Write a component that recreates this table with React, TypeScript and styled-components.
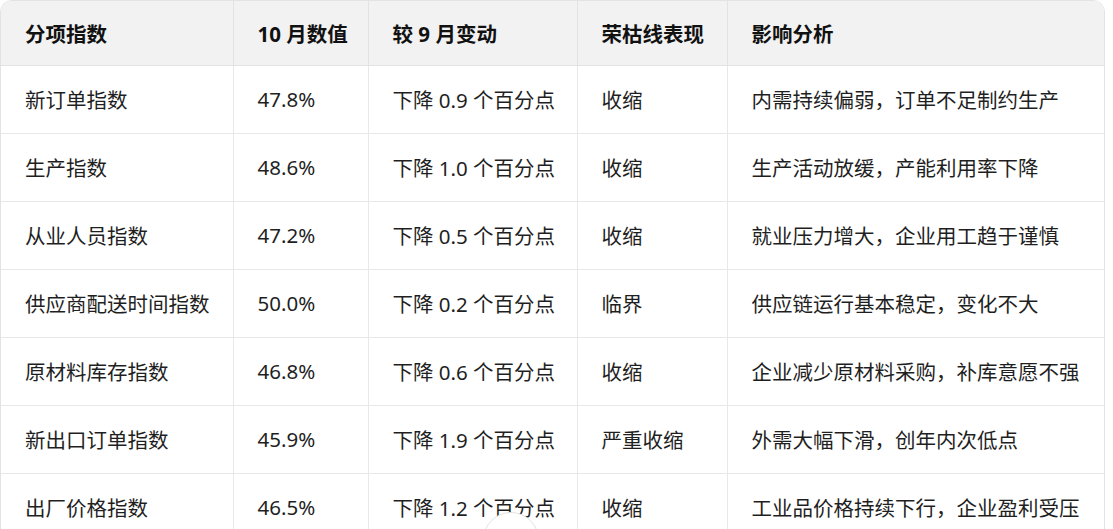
import styled, { createGlobalStyle } from "styled-components";

const GlobalStyle = createGlobalStyle`
  html, body {
    margin: 0;
    padding: 0;
    background: #fff;
    overflow: hidden;
  }
  body {
    font-family: "Noto Sans", "Noto Sans CJK SC", sans-serif;
    color: #1f1f1f;
  }
`;

const Page = styled.div`
  position: relative;
  width: 1113px;
  height: 529px;
  overflow: hidden;
`;

const TableWrap = styled.div`
  width: 1105px;
  border: 1px solid #e3e3e3;
  border-radius: 12px;
  overflow: hidden;
  box-sizing: border-box;
`;

const Table = styled.table`
  width: 100%;
  border-collapse: collapse;
  table-layout: fixed;
  font-size: 20.5px;
`;

const HeadCell = styled.th<{ $w: number }>`
  width: ${(p) => p.$w}px;
  height: 64px;
  padding: 0 0 0 24px;
  background: #f2f2f2;
  text-align: left;
  font-weight: 700;
  color: #111;
  border-bottom: 1px solid #e3e3e3;
  border-left: 1px solid #e3e3e3;
  box-sizing: border-box;
  &:first-child {
    border-left: none;
  }
`;

const Cell = styled.td`
  height: 68px;
  padding: 0 0 0 24px;
  border-bottom: 1px solid #e8e8e8;
  border-left: 1px solid #e8e8e8;
  white-space: nowrap;
  box-sizing: border-box;
  &:first-child {
    border-left: none;
  }
`;

const ScrollButton = styled.button`
  position: absolute;
  left: 483px;
  top: 512px;
  width: 56px;
  height: 56px;
  border-radius: 50%;
  border: 1px solid #e2e2e2;
  background: #fff;
  padding: 0;
`;

const columns = [
  { label: "分项指数", w: 232 },
  { label: "10 月数值", w: 135 },
  { label: "较 9 月变动", w: 209 },
  { label: "荣枯线表现", w: 150 },
  { label: "影响分析", w: 377 },
];

const rows = [
  ["新订单指数", "47.8%", "下降 0.9 个百分点", "收缩", "内需持续偏弱，订单不足制约生产"],
  ["生产指数", "48.6%", "下降 1.0 个百分点", "收缩", "生产活动放缓，产能利用率下降"],
  ["从业人员指数", "47.2%", "下降 0.5 个百分点", "收缩", "就业压力增大，企业用工趋于谨慎"],
  ["供应商配送时间指数", "50.0%", "下降 0.2 个百分点", "临界", "供应链运行基本稳定，变化不大"],
  ["原材料库存指数", "46.8%", "下降 0.6 个百分点", "收缩", "企业减少原材料采购，补库意愿不强"],
  ["新出口订单指数", "45.9%", "下降 1.9 个百分点", "严重收缩", "外需大幅下滑，创年内次低点"],
  ["出厂价格指数", "46.5%", "下降 1.2 个百分点", "收缩", "工业品价格持续下行，企业盈利受压"],
];

export default function App() {
  return (
    <Page>
      <GlobalStyle />
      <TableWrap>
        <Table>
          <thead>
            <tr>
              {columns.map((c) => (
                <HeadCell key={c.label} $w={c.w}>
                  {c.label}
                </HeadCell>
              ))}
            </tr>
          </thead>
          <tbody>
            {rows.map((r) => (
              <tr key={r[0]}>
                {r.map((v, i) => (
                  <Cell key={i}>{v}</Cell>
                ))}
              </tr>
            ))}
          </tbody>
        </Table>
      </TableWrap>
      <ScrollButton aria-label="scroll down" />
    </Page>
  );
}
